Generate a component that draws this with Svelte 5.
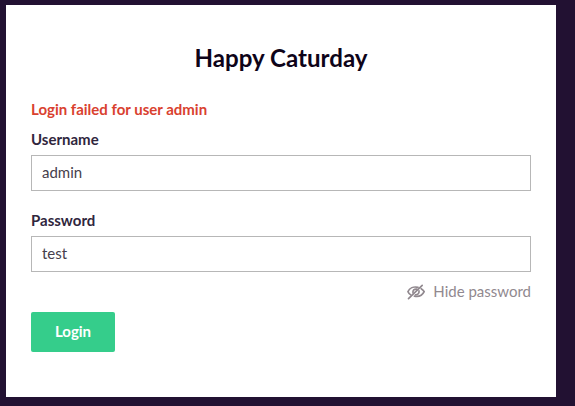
<script>
  let username = $state('admin');
  let password = $state('test');
  let visible = $state(true);
</script>

<main>
  <form class="card" onsubmit={(e) => e.preventDefault()}>
    <h1>Happy Caturday</h1>
    <p class="error">Login failed for user admin</p>
    <label for="username">Username</label>
    <input id="username" type="text" spellcheck="false" bind:value={username} />
    <label for="password">Password</label>
    <input id="password" type={visible ? 'text' : 'password'} spellcheck="false" bind:value={password} />
    <button type="button" class="toggle" onclick={() => (visible = !visible)}>
      <svg width="18" height="16" viewBox="0 0 18 16" fill="none" stroke="currentColor" stroke-width="1.7" stroke-linecap="round">
        <path d="M11 3.4C6.500 2.300 2.500 4.300 1 7.700c.5 1.300 1.500 2.400 2.800 3.200M14.200 4.700c1.300.7 2.300 1.700 3 3-1.800 3.600-5.700 5.300-9.800 4.500" />
        <path d="M9.700 5.100C7.200 4.700 5.500 6.500 6 8.800M12 6.900c.4 2.300-1.200 4-3.500 3.900" />
        <path d="M15.200 1.400 1.500 14.600" />
      </svg>
      <span>{visible ? 'Hide' : 'Show'} password</span>
    </button>
    <button type="submit" class="login">Login</button>
  </form>
</main>

<style>
  :global(body) {
    background: #221132;
  }
  main {
    box-sizing: border-box;
    height: 406px;
    padding: 5px 19px 9px 6px;
    font-family: Lato, sans-serif;
    font-size: 15px;
    color: #30263d;
  }
  .card {
    box-sizing: border-box;
    height: 392px;
    padding: 38px 25px 0;
    background: #fff;
    display: flex;
    flex-direction: column;
  }
  h1 {
    margin: 0 0 26px;
    font-size: 24.1px;
    line-height: 30px;
    font-weight: 700;
    text-align: center;
    color: #0e0419;
  }
  .error {
    margin: 0 0 10px;
    line-height: 20px;
    font-weight: 700;
    color: #d9412f;
  }
  label {
    line-height: 20px;
    margin-bottom: 6px;
    font-weight: 700;
  }
  input {
    box-sizing: border-box;
    width: 100%;
    height: 36px;
    margin: 0;
    padding: 0 10px 2px;
    border: 1px solid #b7b7b7;
    border-radius: 0;
    outline: none;
    background: #fff;
    font: inherit;
    color: #46404c;
  }
  #username {
    margin-bottom: 19px;
  }
  button {
    border: 0;
    font: inherit;
    cursor: pointer;
  }
  .toggle {
    display: flex;
    align-items: center;
    align-self: flex-end;
    gap: 8px;
    height: 20px;
    margin: 9px 0 11px;
    padding: 0;
    background: none;
    color: #91898f;
  }
  .toggle svg {
    margin-top: 2px;
  }
  .login {
    width: 84px;
    height: 40px;
    padding: 0 0 2px;
    border-radius: 2px;
    background: #35cd8b;
    color: #fff;
    font-weight: 700;
  }
</style>
